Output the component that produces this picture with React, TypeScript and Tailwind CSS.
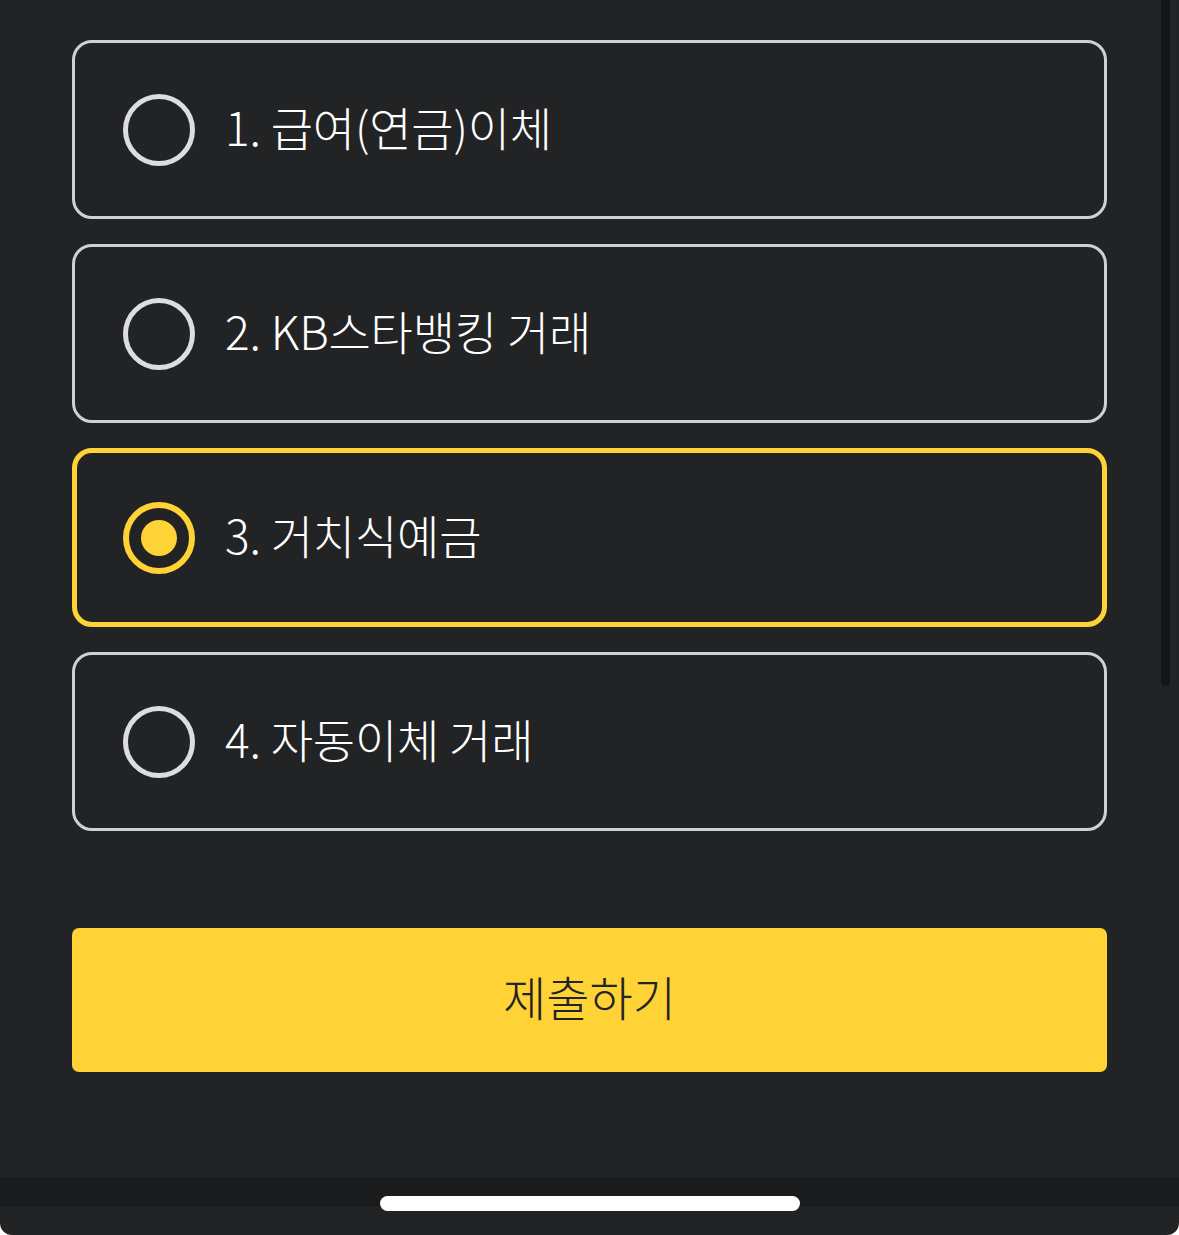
import React, { useState } from 'react';

const OPTIONS = ['1. 급여(연금)이체', '2. KB스타뱅킹 거래', '3. 거치식예금', '4. 자동이체 거래'];

const Radio: React.FC<{ checked: boolean }> = ({ checked }) => (
  <span
    className={`flex h-[72px] w-[72px] shrink-0 items-center justify-center rounded-full ${
      checked ? 'border-[6px] border-[#ffd335]' : 'border-[5px] border-[#dcdde0]'
    }`}
  >
    {checked && <span className="h-[36px] w-[36px] rounded-full bg-[#ffd335]" />}
  </span>
);

const App: React.FC = () => {
  const [selected, setSelected] = useState(2);

  return (
    <div
      className="relative flex h-[1235px] w-[1179px] flex-col overflow-hidden rounded-b-[12px] bg-[#222325]"
      style={{ fontFamily: '"Noto Sans CJK KR", "Noto Sans", sans-serif' }}
    >
      {/* scrollbar */}
      <div className="absolute right-[9px] top-0 h-[686px] w-[9px] rounded-b-full bg-[#141516]" />

      <div className="flex flex-col gap-[25px] px-[72px] pt-[40px]">
        {OPTIONS.map((label, i) => {
          const checked = i === selected;
          return (
            <button
              key={label}
              onClick={() => setSelected(i)}
              className={`flex h-[179px] w-[1035px] items-center gap-[30px] rounded-[20px] text-left ${
                checked ? 'border-[5px] border-[#ffd335] pl-[46px]' : 'border-[3px] border-[#cfd1d5] pl-[48px]'
              }`}
            >
              <Radio checked={checked} />
              <span className="-mt-[7px] text-[46px] font-light leading-none tracking-[-0.2px] text-white">
                {label}
              </span>
            </button>
          );
        })}
      </div>

      <div className="px-[72px] pt-[97px]">
        <button className="flex h-[144px] w-[1035px] items-center justify-center rounded-[7px] bg-[#ffd335] pb-[8px] text-[47px] font-light text-[#222325]">
          제출하기
        </button>
      </div>

      <div className="mt-auto mb-[28px] flex h-[30px] items-end justify-center bg-[#1a1b1d]">
        <div className="relative top-[4px] h-[15px] w-[420px] rounded-full bg-white" />
      </div>
    </div>
  );
};

export default App;
